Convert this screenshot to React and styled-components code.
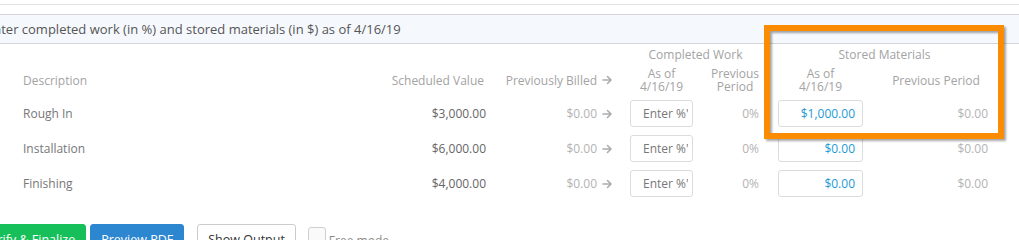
import React from "react";
import styled, { createGlobalStyle } from "styled-components";

const Global = createGlobalStyle`
  html, body { margin: 0; padding: 0; background: #fff; overflow: hidden; }
  body { font-family: "Open Sans", "Liberation Sans", sans-serif; }
  * { box-sizing: border-box; }
`;

const Page = styled.div`
  position: relative;
  margin-left: -30px;
  width: 1049px;
  height: 240px;
  overflow: hidden;
`;

const TopRule = styled.div`
  height: 5px;
  border-bottom: 1px solid #e3e3e3;
  margin-bottom: 9px;
`;

const Band = styled.div`
  height: 30px;
  background: #f5f9fd;
  border-top: 1px solid #d4d4d4;
  border-bottom: 1px solid #d4d4d4;
  display: flex;
  align-items: center;
  padding-left: 16px;
  font-size: 13px;
  color: #555;
`;

const Grid = styled.div`
  display: grid;
  grid-template-columns: 410px 114px 128px 79px 68px 103px 128px;
  grid-auto-rows: 35px;
  grid-template-rows: 20px 32px;
  padding-right: 19px;
`;

const Cell = styled.div`
  display: flex;
  align-items: center;
  justify-content: ${(p) => (p.$align === "left" ? "flex-start" : p.$align === "center" ? "center" : "flex-end")};
  padding-left: ${(p) => p.$pl || 0}px;
  padding-right: ${(p) => p.$pr || 0}px;
  grid-column: ${(p) => p.$span || "auto"};
  font-size: 12px;
  color: ${(p) => p.$color || "#777"};
  text-align: ${(p) => p.$align || "right"};
  white-space: nowrap;
`;

const HeadText = styled.span`
  color: #a3a3a3;
  font-size: 12px;
  line-height: 13px;
  text-align: inherit;
`;

const Muted = styled.span`
  color: #b3b3b3;
  display: inline-flex;
  align-items: center;
  gap: 5px;
`;

const Field = styled.input`
  width: ${(p) => p.$w}px;
  height: 27px;
  border: 1px solid #dcdcdc;
  border-radius: 3px;
  background: #fff;
  font-family: inherit;
  font-size: 12px;
  padding: ${(p) => (p.$money ? "0 7px 0 4px" : "0 4px 0 12px")};
  text-align: ${(p) => (p.$money ? "right" : "left")};
  color: ${(p) => (p.$money ? "#1b9ad6" : "#777")};
  outline: none;
  &::placeholder { color: #777; opacity: 1; }
`;

const Actions = styled.div`
  display: flex;
  align-items: flex-start;
  margin-top: 23px;
  padding-left: 2px;
`;

const Button = styled.button`
  height: 31px;
  padding: 0 10px;
  border-radius: 3px;
  font-family: inherit;
  font-size: 12.5px;
  margin-right: ${(p) => p.$mr || 0}px;
  border: 1px solid ${(p) => (p.$kind === "green" ? "#16bf5a" : p.$kind === "blue" ? "#2d86d0" : "#cccccc")};
  background: ${(p) => (p.$kind === "green" ? "#16bf5a" : p.$kind === "blue" ? "#2d86d0" : "#fff")};
  color: ${(p) => (p.$kind === "plain" ? "#333" : "#fff")};
`;

const CheckLabel = styled.label`
  display: flex;
  align-items: flex-start;
  gap: 3px;
  margin-top: 3px;
  font-size: 12px;
  color: #8a8a8a;
  line-height: 18px;
`;

const LabelText = styled.span`
  padding-top: 5px;
`;

const Box = styled.span`
  width: 18px;
  height: 18px;
  border: 1px solid #cfcfcf;
  border-radius: 3px;
  background: #fafafa;
`;

const Highlight = styled.div`
  position: absolute;
  left: 794px;
  top: 25px;
  width: 240px;
  height: 114px;
  border: 6px solid #fb8b00;
  filter: drop-shadow(2px 2px 1px rgba(0, 0, 0, 0.35));
  pointer-events: none;
`;

const Arrow = () => (
  <svg width="10" height="10" viewBox="0 0 10 10" fill="none" stroke="#acacac" strokeWidth="1.6" strokeLinecap="round" strokeLinejoin="round">
    <path d="M1 5h8M5.5 1.5L9 5 5.5 8.5" />
  </svg>
);

const rows = [
  { name: "Rough In", value: "$3,000.00", stored: "$1,000.00" },
  { name: "Installation", value: "$6,000.00", stored: "$0.00" },
  { name: "Finishing", value: "$4,000.00", stored: "$0.00" },
];

export default function App() {
  return (
    <>
      <Global />
      <Page>
        <TopRule />
        <Band>Enter completed work (in %) and stored materials (in $) as of 4/16/19</Band>
        <Grid>
          <Cell $span="1 / 4" />
          <Cell $span="4 / 6" $align="center"><HeadText>Completed Work</HeadText></Cell>
          <Cell $span="6 / 8" $align="center"><HeadText>Stored Materials</HeadText></Cell>

          <Cell $align="left" $pl={53}><HeadText>Description</HeadText></Cell>
          <Cell $pr={10}><HeadText>Scheduled Value</HeadText></Cell>
          <Cell $pr={10}><Muted><HeadText>Previously Billed</HeadText><Arrow /></Muted></Cell>
          <Cell $align="center"><HeadText>As of<br />4/16/19</HeadText></Cell>
          <Cell $align="center"><HeadText>Previous<br />Period</HeadText></Cell>
          <Cell $align="center"><HeadText>As of<br />4/16/19</HeadText></Cell>
          <Cell $align="center"><HeadText>Previous Period</HeadText></Cell>

          {rows.map((r) => (
            <React.Fragment key={r.name}>
              <Cell $align="left" $pl={53} $color="#777">{r.name}</Cell>
              <Cell $pr={8} $color="#666">{r.value}</Cell>
              <Cell $pr={10}><Muted>$0.00<Arrow /></Muted></Cell>
              <Cell $align="center"><Field $w={63} placeholder="Enter %'" readOnly /></Cell>
              <Cell $pr={10}><Muted>0%</Muted></Cell>
              <Cell $align="center"><Field $w={85} $money defaultValue={r.stored} readOnly /></Cell>
              <Cell $pr={12}><Muted>$0.00</Muted></Cell>
            </React.Fragment>
          ))}
        </Grid>
        <Actions>
          <Button $kind="green" $mr={4}>Verify &amp; Finalize</Button>
          <Button $kind="blue" $mr={13}>Preview PDF</Button>
          <Button $kind="plain" $mr={12}>Show Output</Button>
          <CheckLabel><Box /><LabelText>Free mode</LabelText></CheckLabel>
        </Actions>
        <Highlight />
      </Page>
    </>
  );
}
